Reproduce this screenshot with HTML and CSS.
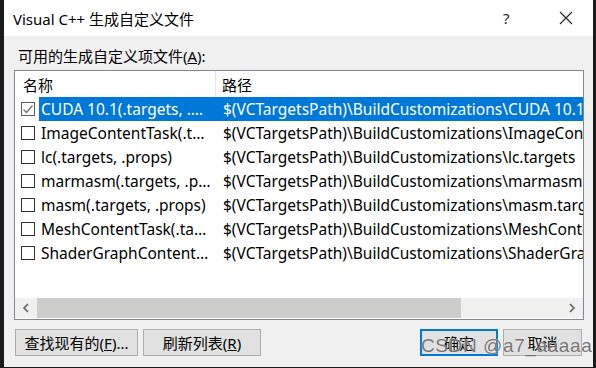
FILE: index.html
```html
<!DOCTYPE html>
<html lang="zh-CN">
<head>
<meta charset="utf-8">
<title>Visual C++ 生成自定义文件</title>
<link rel="stylesheet" href="styles.css">
</head>
<body>
<div class="window">
  <div class="titlebar">
    <span class="title">Visual C++ 生成自定义文件</span>
    <span class="tb-help">?</span>
    <span class="tb-close">
      <svg width="14" height="14" viewBox="0 0 14 14"><path d="M1 1L13 13M13 1L1 13" stroke="#222" stroke-width="1.1" fill="none"/></svg>
    </span>
  </div>
  <div class="content">
    <div class="label">可用的生成自定义项文件(<u>A</u>):</div>
    <div class="listbox">
      <div class="header">
        <div class="col-name">名称</div>
        <div class="col-path">路径</div>
      </div>
      <div class="rows">
        <div class="row selected">
          <div class="cell-name"><span class="cb checked"><svg width="12" height="12" viewBox="0 0 12 12"><path d="M1.5 6.5L4.5 9.5L10.5 2.5" stroke="#6e6e6e" stroke-width="1.2" fill="none"/></svg></span><span class="name">CUDA 10.1(.targets, .props)</span></div>
          <div class="cell-path">$(VCTargetsPath)\BuildCustomizations\CUDA 10.1.targets</div>
        </div>
        <div class="row">
          <div class="cell-name"><span class="cb"></span><span class="name">ImageContentTask(.targets, .props)</span></div>
          <div class="cell-path">$(VCTargetsPath)\BuildCustomizations\ImageContentTask.targets</div>
        </div>
        <div class="row">
          <div class="cell-name"><span class="cb"></span><span class="name">lc(.targets, .props)</span></div>
          <div class="cell-path">$(VCTargetsPath)\BuildCustomizations\lc.targets</div>
        </div>
        <div class="row">
          <div class="cell-name"><span class="cb"></span><span class="name">marmasm(.targets, .props)</span></div>
          <div class="cell-path">$(VCTargetsPath)\BuildCustomizations\marmasm.targets</div>
        </div>
        <div class="row">
          <div class="cell-name"><span class="cb"></span><span class="name">masm(.targets, .props)</span></div>
          <div class="cell-path">$(VCTargetsPath)\BuildCustomizations\masm.targets</div>
        </div>
        <div class="row">
          <div class="cell-name"><span class="cb"></span><span class="name">MeshContentTask(.targets, .props)</span></div>
          <div class="cell-path">$(VCTargetsPath)\BuildCustomizations\MeshContentTask.targets</div>
        </div>
        <div class="row">
          <div class="cell-name"><span class="cb"></span><span class="name">ShaderGraphContentTask(.targets, .props)</span></div>
          <div class="cell-path">$(VCTargetsPath)\BuildCustomizations\ShaderGraphContentTask.targets</div>
        </div>
      </div>
      <div class="hscroll">
        <span class="arrow"><svg width="8" height="10" viewBox="0 0 8 10"><path d="M6 1L2 5L6 9" stroke="#606060" stroke-width="1.6" fill="none"/></svg></span>
        <div class="track"><div class="thumb"></div></div>
        <span class="arrow"><svg width="8" height="10" viewBox="0 0 8 10"><path d="M2 1L6 5L2 9" stroke="#606060" stroke-width="1.6" fill="none"/></svg></span>
      </div>
    </div>
    <div class="buttons">
      <button class="btn btn-find">查找现有的(<u>F</u>)...</button>
      <button class="btn btn-refresh">刷新列表(<u>R</u>)</button>
      <span class="spacer"></span>
      <button class="btn btn-ok">确定</button>
      <button class="btn btn-cancel">取消</button>
    </div>
  </div>
  <div class="watermark">CSDN @a7_aaaaa</div>
</div>
</body>
</html>
```
FILE: styles.css
```css
* { box-sizing: border-box; }
html, body { margin: 0; padding: 0; }
body {
  width: 596px;
  height: 368px;
  background: #1b1b1b;
  font-family: "Noto Sans", "Noto Sans CJK SC", sans-serif;
  color: #000;
  overflow: hidden;
}
.window {
  position: relative;
  margin-left: 4px;
  width: 589px;
  height: 367px;
  background: #f0f0f0;
  display: flex;
  flex-direction: column;
}
.titlebar {
  height: 36px;
  background: #fff;
  display: flex;
  align-items: center;
  padding-left: 9px;
  font-size: 15px;
}
.title { flex: 1; color: #000; }
.tb-help { width: 20px; margin-right: 36px; font-size: 15px; color: #222; }
.tb-close { width: 34px; display: flex; align-items: center; }
.content {
  padding: 10px 6px 0 10px;
  display: flex;
  flex-direction: column;
}
.label {
  font-size: 15px;
  height: 24px;
  padding-left: 4px;
  line-height: 20px;
}
.listbox {
  width: 570px;
  height: 250px;
  border: 1px solid #828790;
  background: #fff;
  display: flex;
  flex-direction: column;
  overflow: hidden;
}
.header {
  height: 26px;
  display: flex;
  font-size: 15px;
  flex-shrink: 0;
}
.col-name {
  width: 201px;
  padding-left: 8px;
  line-height: 28px;
  border-right: 1px solid #e5e5e5;
}
.col-path { padding-left: 6px; line-height: 28px; }
.rows { flex: 1; }
.row {
  height: 24px;
  display: flex;
  font-size: 15.5px;
  line-height: 24px;
  white-space: nowrap;
}
.cell-name {
  width: 201px;
  display: flex;
  align-items: center;
  padding-left: 6px;
  flex-shrink: 0;
}
.cb {
  width: 14px;
  height: 14px;
  border: 1px solid #333;
  background: #fff;
  flex-shrink: 0;
  margin-right: 4px;
  display: flex;
  align-items: center;
  justify-content: center;
}
.cb.checked { border-color: #5a5a5a; }
.name {
  flex: 1;
  overflow: hidden;
  text-overflow: ellipsis;
  padding-left: 2px;
  padding-right: 4px;
}
.cell-path {
  padding-left: 7px;
  overflow: hidden;
  flex: 1;
}
.row.selected .name,
.row.selected .cell-path { background: #0078d7; color: #fff; }
.hscroll {
  height: 20px;
  display: flex;
  align-items: center;
  background: #f0f0f0;
  flex-shrink: 0;
  margin-bottom: 1px;
}
.arrow {
  width: 22px;
  height: 20px;
  display: flex;
  align-items: center;
  justify-content: center;
}
.track { flex: 1; height: 20px; display: flex; }
.thumb { width: 424px; height: 20px; background: #cdcdcd; }
.buttons {
  display: flex;
  margin-top: 9px;
  padding-left: 1px;
}
.btn {
  height: 27px;
  font-family: "Noto Sans", "Noto Sans CJK SC", sans-serif;
  font-size: 15px;
  background: #e1e1e1;
  border: 1px solid #adadad;
  padding: 0;
  color: #000;
  line-height: 24px;
}
.btn-find { width: 123px; margin-right: 5px; }
.btn-refresh { width: 118px; }
.spacer { flex: 1; }
.btn-ok { width: 78px; border: 2px solid #0078d7; margin-right: 5px; }
.btn-cancel { width: 79px; margin-right: 5px; }
.watermark {
  position: absolute;
  left: 417px;
  top: 336px;
  font-family: "Liberation Sans", Arial, sans-serif;
  font-size: 19px;
  line-height: 20px;
  color: rgba(100, 100, 100, 0.9);
  text-shadow: 0 0 1px rgba(255,255,255,0.9);
  letter-spacing: 0.6px;
}
```
